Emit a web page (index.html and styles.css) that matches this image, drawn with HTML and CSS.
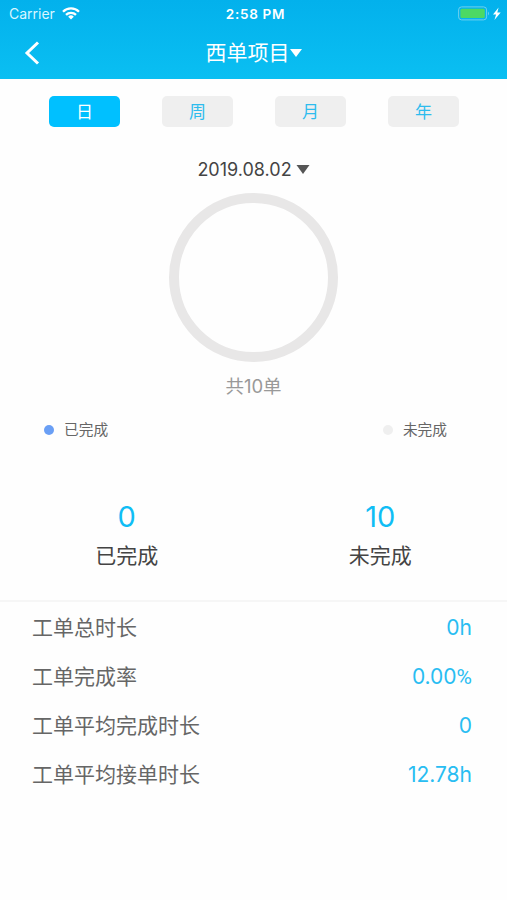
FILE: index.html
```html
<!DOCTYPE html>
<html lang="zh-CN">
<head>
  <meta charset="UTF-8">
  <title>西单项目</title>
  <link rel="stylesheet" href="styles.css">
</head>
<body>
  <header class="header">
    <div class="status-bar">
      <div class="carrier">
        <span class="carrier-name">Carrier</span>
        <svg class="wifi" width="18" height="13" viewBox="0 0 18 13" fill="none" stroke="#fff" stroke-width="2.3">
          <path d="M1 4.8a11.2 11.2 0 0 1 16 0"/>
          <path d="M4 7.9a7 7 0 0 1 10 0"/>
          <path d="M9 12.4 6.2 9.7a4 4 0 0 1 5.6 0z" fill="#fff" stroke="none"/>
        </svg>
      </div>
      <span class="clock">2:58 PM</span>
      <svg class="battery" width="44" height="15" viewBox="0 0 44 15">
        <rect x=".6" y=".9" width="28" height="13" rx="3" fill="none" stroke="#6fd0ee" stroke-width="1"/>
        <rect x="2.4" y="2.7" width="24.4" height="9.4" rx="1.5" fill="#4cd964"/>
        <path d="M30 5.4q2 2 0 4z" fill="#6fd0ee"/>
        <path d="M40.6 1.5 35 8.4h3.1L36.4 14l6.3-7.6h-3.4z" fill="#fff"/>
      </svg>
    </div>
    <div class="nav-bar">
      <svg class="back" width="16" height="24" viewBox="0 0 16 24" fill="none" stroke="#fff" stroke-width="3">
        <path d="M14 1.5 3 12 14 22.5"/>
      </svg>
      <h1 class="title">西单项目<svg class="caret" width="12" height="8" viewBox="0 0 12 8"><path d="M0 0h12L6 8z" fill="#fff"/></svg></h1>
    </div>
  </header>

  <!-- 日 / 周 / 月 / 年 -->
  <nav class="tabs">
    <button class="tab active">日</button>
    <button class="tab">周</button>
    <button class="tab">月</button>
    <button class="tab">年</button>
  </nav>

  <div class="date">
    <span>2019.08.02</span>
    <svg width="14" height="9" viewBox="0 0 14 9"><path d="M.5 0h13L7 9z" fill="#555"/></svg>
  </div>

  <div class="ring"></div>
  <div class="total">共10单</div>

  <div class="legend">
    <div class="legend-item"><i class="dot done"></i><span>已完成</span></div>
    <div class="legend-item"><i class="dot"></i><span>未完成</span></div>
  </div>

  <div class="counts">
    <div class="count">
      <div class="count-num">0</div>
      <div class="count-label">已完成</div>
    </div>
    <div class="count">
      <div class="count-num">10</div>
      <div class="count-label">未完成</div>
    </div>
  </div>

  <!-- 工单统计 -->
  <ul class="stats">
    <li><span>工单总时长</span><span class="value">0h</span></li>
    <li><span>工单完成率</span><span class="value">0.00<span class="percent">%</span></span></li>
    <li><span>工单平均完成时长</span><span class="value">0</span></li>
    <li><span>工单平均接单时长</span><span class="value">12.78h</span></li>
  </ul>
</body>
</html>
```
FILE: styles.css
```css
* {
  box-sizing: border-box;
}
body {
  margin: 0;
  min-height: 900px;
  background-color: #fefefe;
  font-family: Inter, "Noto Sans CJK SC", sans-serif;
  color: #444;
}
.header {
  height: 79px;
  background: linear-gradient(#03b1ec, #0abff2);
  color: #fff;
}
.status-bar {
  display: grid;
  grid-template-columns: 1fr auto 1fr;
  align-items: center;
  height: 27px;
  padding: 0 5px 0 9px;
}
.carrier {
  display: flex;
  align-items: center;
  gap: 7px;
  font-size: 14px;
  color: #d9f6ff;
}
.clock {
  font-size: 13.5px;
  font-weight: 600;
  letter-spacing: 0.7px;
}
.battery {
  justify-self: end;
}
.nav-bar {
  display: grid;
  grid-template-columns: 40px 1fr 40px;
  align-items: center;
  height: 52px;
}
.back {
  margin-left: 24px;
}
.title {
  display: flex;
  justify-content: center;
  align-items: center;
  margin: 0;
  font-size: 21px;
  font-weight: 400;
  line-height: 52px;
}
.tabs {
  display: flex;
  justify-content: space-between;
  padding: 17px 48px 0 49px;
}
.tab {
  width: 71px;
  height: 31px;
  padding: 2px 0 0;
  border: none;
  border-radius: 5px;
  background-color: #efefef;
  color: #2dbcee;
  font-family: inherit;
  font-size: 17px;
  line-height: 29px;
}
.tab.active {
  background-color: #00c0ff;
  color: #fff;
}
.date {
  display: flex;
  justify-content: center;
  align-items: center;
  gap: 4px;
  margin-top: 26px;
  height: 32px;
  font-size: 18px;
}
.ring {
  width: 169px;
  height: 169px;
  margin: 8px auto 0;
  border: 10px solid #e8e7e7;
  border-radius: 50%;
}
.total {
  margin-top: 8px;
  text-align: center;
  font-size: 18.5px;
  line-height: 32px;
  color: #999;
}
.legend {
  display: flex;
  justify-content: space-between;
  margin-top: 14px;
  padding: 0 60px 0 44px;
}
.legend-item {
  display: flex;
  align-items: center;
  gap: 10px;
  height: 28px;
  font-size: 14.7px;
  color: #666;
}
.legend-item span {
  padding-bottom: 3px;
}
.dot {
  width: 10px;
  height: 10px;
  border-radius: 50%;
  background-color: #efefef;
}
.dot.done {
  background-color: #6a9ff5;
}
.counts {
  display: flex;
  height: 158px;
  padding-top: 52px;
  border-bottom: 2px solid #f6f6f6;
}
.count {
  flex: 1;
  text-align: center;
}
.count-num {
  font-size: 29px;
  line-height: 42px;
  color: #10bdf5;
}
.count-label {
  font-size: 21px;
  line-height: 36px;
}
.stats {
  margin: 0;
  padding: 0 35px 0 32px;
  list-style: none;
}
.stats li {
  display: flex;
  justify-content: space-between;
  align-items: center;
  height: 49px;
  padding-bottom: 1px;
  font-size: 21px;
  color: #666;
}
.stats .value {
  padding-top: 2px;
  color: #29bdf2;
}
.percent {
  font-family: Roboto, sans-serif;
}
```
